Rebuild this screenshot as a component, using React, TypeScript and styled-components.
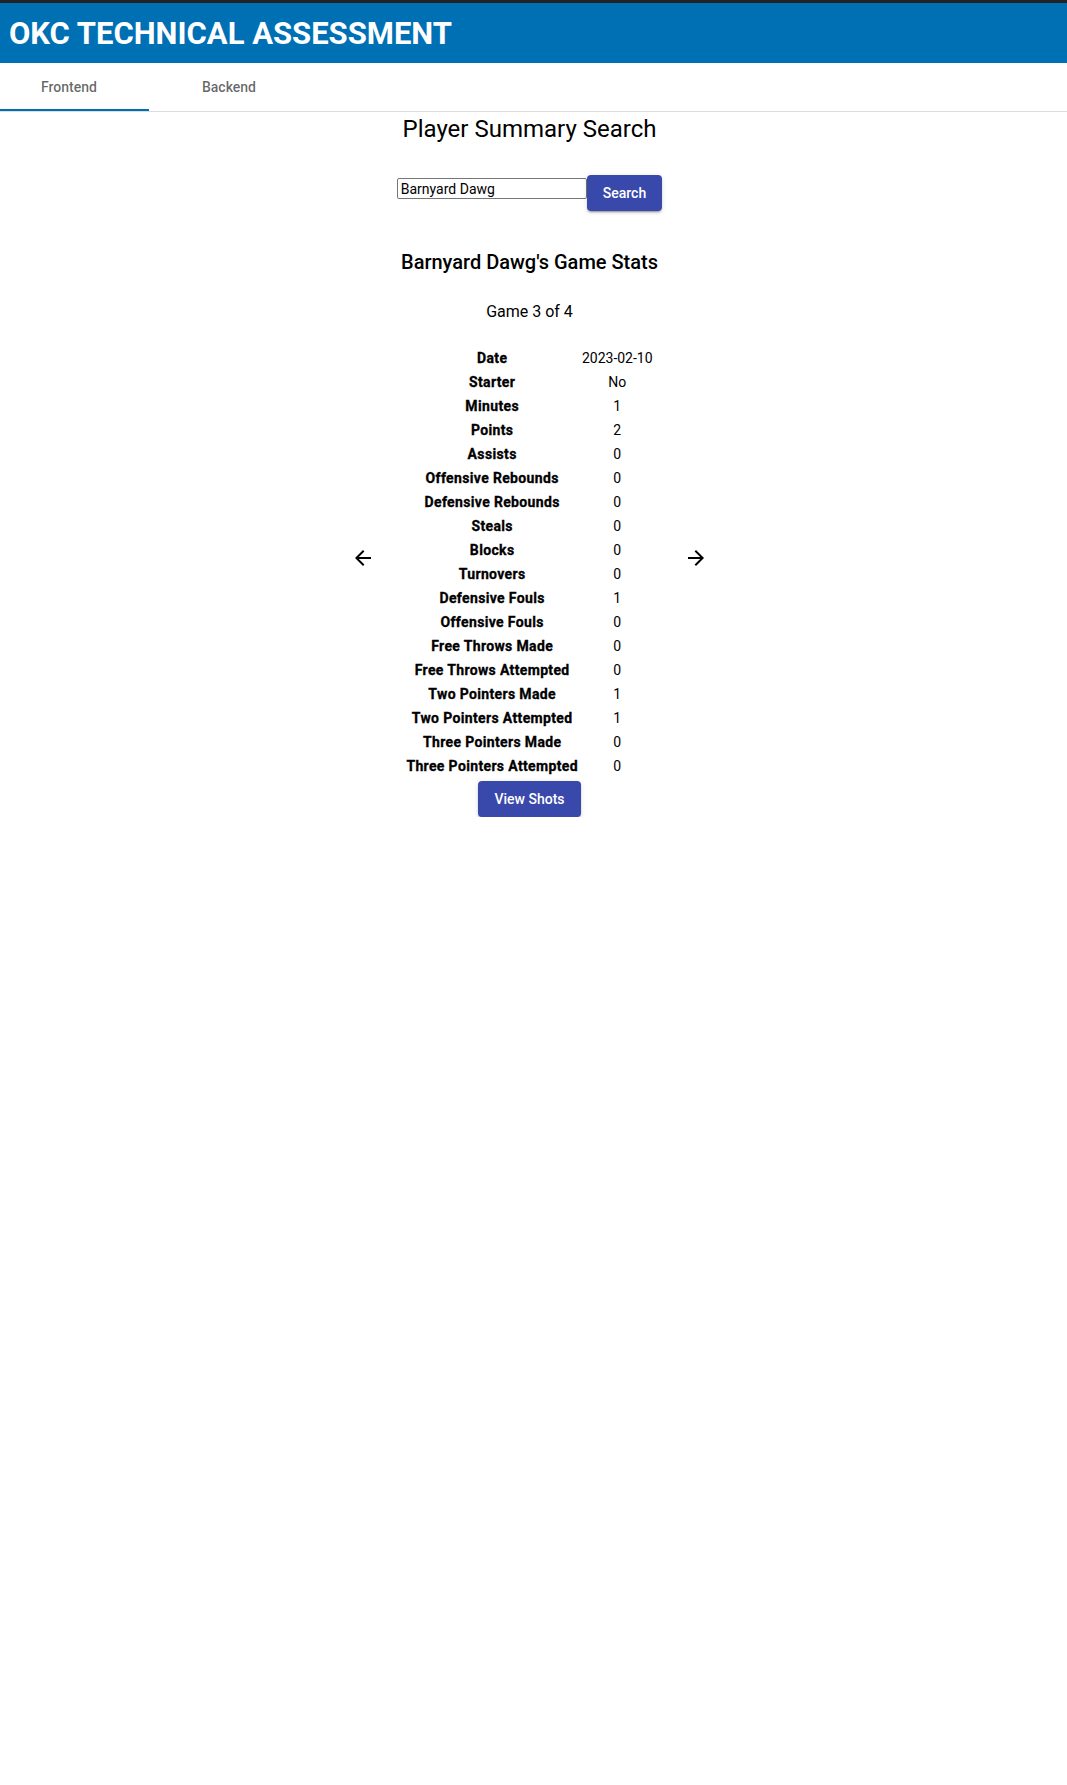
import React, { useState } from "react";
import styled, { createGlobalStyle } from "styled-components";

const GlobalStyle = createGlobalStyle`
  html, body {
    margin: 0;
    padding: 0;
    background: #ffffff;
  }
  body {
    font-family: Roboto, "Liberation Sans", Arial, sans-serif;
    color: #000000;
  }
`;

const TopStrip = styled.div`
  height: 3px;
  background: #232323;
`;

const Header = styled.header`
  height: 60px;
  background: #0070b5;
  display: flex;
  align-items: center;
  padding: 0 9px;
`;

const Title = styled.h1`
  margin: 0;
  font-family: Roboto, "Liberation Sans", Arial, sans-serif;
  font-weight: 700;
  font-size: 31px;
  color: #ffffff;
`;

const TabBar = styled.nav`
  display: flex;
  height: 48px;
  border-bottom: 1px solid #dcdcdc;
`;

const Tab = styled.button<{ $active?: boolean; $width: number; $shift?: number }>`
  box-sizing: border-box;
  width: ${({ $width }) => $width}px;
  height: 48px;
  border: none;
  background: transparent;
  font-family: Roboto, "Liberation Sans", Arial, sans-serif;
  font-weight: 500;
  font-size: 14px;
  color: rgba(0, 0, 0, 0.6);
  cursor: pointer;
  padding: 1px ${({ $shift }) => $shift ?? 0}px 0 0;
  border-bottom: 2px solid ${({ $active }) => ($active ? "#0070b5" : "transparent")};
`;

const Main = styled.main`
  display: flex;
  flex-direction: column;
  align-items: center;
  padding-right: 8px;
`;

const PageTitle = styled.h2`
  margin: 1px 0 0;
  font-weight: 400;
  font-size: 24px;
  line-height: 32px;
`;

const SearchRow = styled.form`
  display: flex;
  align-items: flex-start;
  margin-top: 30px;
`;

const SearchInput = styled.input`
  box-sizing: border-box;
  width: 190px;
  height: 21px;
  margin-top: 3px;
  padding: 1px 3px;
  border: 1px solid #767676;
  border-radius: 2px;
  font-family: Roboto, "Liberation Sans", Arial, sans-serif;
  font-size: 14px;
  color: #000000;
  outline: none;
`;

const Button = styled.button`
  height: 36px;
  padding: 6px 16px;
  border: none;
  border-radius: 4px;
  background: #3949ab;
  color: #ffffff;
  font-family: Roboto, "Liberation Sans", Arial, sans-serif;
  font-weight: 500;
  font-size: 14px;
  line-height: 24px;
  cursor: pointer;
  box-shadow: 0px 3px 1px -2px rgba(0, 0, 0, 0.2), 0px 2px 2px 0px rgba(0, 0, 0, 0.14),
    0px 1px 5px 0px rgba(0, 0, 0, 0.12);
`;

const StatsHeading = styled.h3`
  margin: 37px 0 0;
  font-weight: 500;
  font-size: 20px;
  line-height: 28px;
`;

const GameLabel = styled.p`
  margin: 24px 0 0;
  font-size: 16px;
  line-height: 24px;
`;

const Carousel = styled.div`
  display: flex;
  align-items: center;
  gap: 20px;
  margin-top: 21px;
`;

const ArrowButton = styled.button`
  width: 40px;
  height: 40px;
  padding: 8px;
  margin-bottom: 8px;
  border: none;
  border-radius: 50%;
  background: transparent;
  color: #000000;
  cursor: pointer;
  display: flex;
  align-items: center;
  justify-content: center;
  svg {
    width: 24px;
    height: 24px;
    fill: currentColor;
  }
`;

const StatsTable = styled.table`
  border-spacing: 2px;
  font-size: 14px;
  line-height: 20px;

  th, td {
    padding: 1px;
    text-align: center;
    white-space: nowrap;
  }
  th {
    font-weight: 700;
    letter-spacing: 0.35px;
    -webkit-text-stroke: 0.3px #000000;
  }
`;

const ShotsButton = styled(Button)`
  margin-top: 2px;
`;

const games = [
  { date: "2023-02-10", starter: "No", minutes: 1, points: 2, assists: 0, oreb: 0, dreb: 0, steals: 0, blocks: 0, turnovers: 0, dfouls: 1, ofouls: 0, ftm: 0, fta: 0, twom: 1, twoa: 1, threem: 0, threea: 0 },
];

export default function App() {
  const [tab, setTab] = useState("frontend");
  const [name, setName] = useState("Barnyard Dawg");
  const g = games[0];

  const rows: [string, string | number][] = [
    ["Date", g.date],
    ["Starter", g.starter],
    ["Minutes", g.minutes],
    ["Points", g.points],
    ["Assists", g.assists],
    ["Offensive Rebounds", g.oreb],
    ["Defensive Rebounds", g.dreb],
    ["Steals", g.steals],
    ["Blocks", g.blocks],
    ["Turnovers", g.turnovers],
    ["Defensive Fouls", g.dfouls],
    ["Offensive Fouls", g.ofouls],
    ["Free Throws Made", g.ftm],
    ["Free Throws Attempted", g.fta],
    ["Two Pointers Made", g.twom],
    ["Two Pointers Attempted", g.twoa],
    ["Three Pointers Made", g.threem],
    ["Three Pointers Attempted", g.threea],
  ];

  return (
    <>
      <GlobalStyle />
      <TopStrip />
      <Header>
        <Title>OKC TECHNICAL ASSESSMENT</Title>
      </Header>
      <TabBar>
        <Tab $width={149} $shift={11} $active={tab === "frontend"} onClick={() => setTab("frontend")}>Frontend</Tab>
        <Tab $width={160} $active={tab === "backend"} onClick={() => setTab("backend")}>Backend</Tab>
      </TabBar>
      <Main>
        <PageTitle>Player Summary Search</PageTitle>
        <SearchRow onSubmit={(e) => e.preventDefault()}>
          <SearchInput value={name} onChange={(e) => setName(e.target.value)} />
          <Button type="submit">Search</Button>
        </SearchRow>
        <StatsHeading>Barnyard Dawg's Game Stats</StatsHeading>
        <GameLabel>Game 3 of 4</GameLabel>
        <Carousel>
          <ArrowButton aria-label="previous">
            <svg viewBox="0 0 24 24"><path d="M20 11H7.83l5.59-5.59L12 4l-8 8 8 8 1.41-1.41L7.83 13H20v-2z" /></svg>
          </ArrowButton>
          <StatsTable>
            <tbody>
              {rows.map(([label, value]) => (
                <tr key={label}>
                  <th>{label}</th>
                  <td>{value}</td>
                </tr>
              ))}
            </tbody>
          </StatsTable>
          <ArrowButton aria-label="next">
            <svg viewBox="0 0 24 24"><path d="M12 4l-1.41 1.41L16.17 11H4v2h12.17l-5.58 5.59L12 20l8-8z" /></svg>
          </ArrowButton>
        </Carousel>
        <ShotsButton>View Shots</ShotsButton>
      </Main>
    </>
  );
}
